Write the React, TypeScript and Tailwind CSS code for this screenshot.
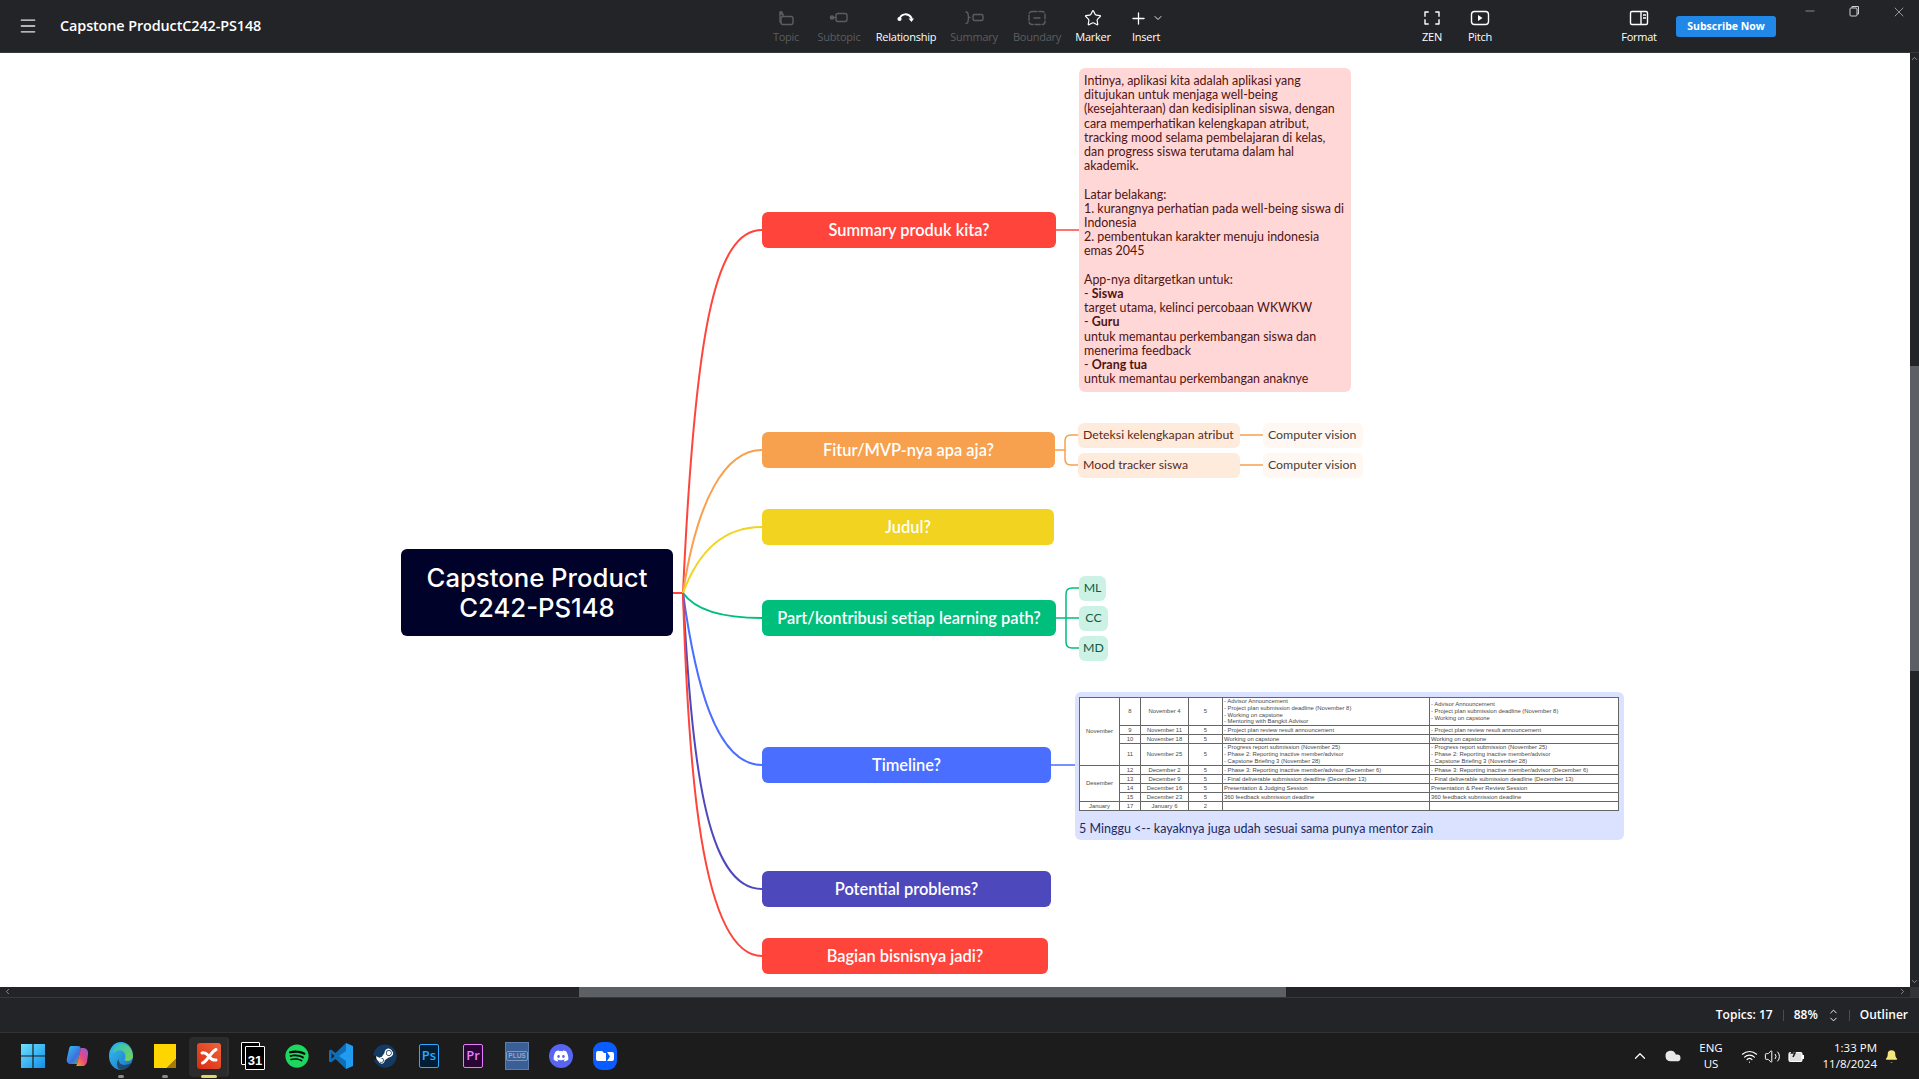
import React from "react";
import { Menu, Star, Plus, ChevronDown, ChevronUp, ChevronLeft, ChevronRight, X, Minus, Wifi, Volume2, Bell, Cloud } from "lucide-react";
import { FaSpotify, FaSteam, FaDiscord } from "react-icons/fa";

const IconBase = ({ children, w = 24 }: { children: React.ReactNode; w?: number }) => (
  <svg width={w} height="20" viewBox={`0 0 ${w} 20`} fill="none" stroke="currentColor" strokeWidth="1.4" strokeLinecap="round" strokeLinejoin="round">
    {children}
  </svg>
);

const TopicIcon = () => (
  <IconBase>
    <rect x="7" y="8.5" width="12" height="8" rx="2" />
    <path d="M9 8.5 V6 H6 V14 H7" />
    <circle cx="7" cy="4.8" r="1.2" fill="currentColor" />
  </IconBase>
);
const SubtopicIcon = () => (
  <IconBase>
    <rect x="9" y="5.5" width="11" height="8" rx="2" />
    <circle cx="5" cy="9.5" r="1.6" fill="currentColor" />
    <path d="M5 9.5 H9" />
  </IconBase>
);
const RelationshipIcon = () => (
  <IconBase>
    <path d="M5.5 11 C7 5.5 14 4.5 17.5 10" strokeWidth="2" />
    <path d="M14.5 10.5 H20 L17.5 14 Z" fill="currentColor" stroke="none" />
    <circle cx="5.5" cy="11" r="1.4" fill="currentColor" />
  </IconBase>
);
const SummaryIcon = () => (
  <IconBase>
    <path d="M4 4 C7 4 6 8 6.5 9.5 C6 11 7 15.5 4 15.5 M6.5 9.5 H8" />
    <rect x="11" y="6.5" width="10" height="6" rx="1.5" />
  </IconBase>
);
const BoundaryIcon = () => (
  <IconBase>
    <rect x="4" y="3.5" width="16" height="13" rx="3" strokeDasharray="5 2" />
    <path d="M9 10 H15" />
  </IconBase>
);
const ZenIcon = () => (
  <IconBase>
    <path d="M8 4 H5 V8 M16 4 H19 V8 M8 16 H5 V12 M16 16 H19 V12" strokeLinecap="square" />
  </IconBase>
);
const PitchIcon = () => (
  <IconBase>
    <rect x="3.5" y="3.5" width="17" height="13" rx="3" />
    <path d="M10 7 L14.5 10 L10 13 Z" fill="currentColor" stroke="none" />
  </IconBase>
);
const FormatIcon = () => (
  <IconBase>
    <rect x="3.5" y="3.5" width="17" height="13" rx="1.5" />
    <path d="M14 3.5 V16.5 M16 7 H19 M16 10 H19" strokeLinecap="butt" />
  </IconBase>
);

const ToolButton = ({ width, label, dim, children }: { width: string; label: string; dim?: boolean; children: React.ReactNode }) => (
  <div className={`flex flex-col items-center h-[52px] pt-[8px] ${width} ${dim ? "text-[#5b5d61]" : "text-white"}`}>
    <div className="h-[20px] flex items-center justify-center">{children}</div>
    <span className="text-[11px] tracking-[-0.25px] leading-[16px] mt-[1px] whitespace-nowrap">{label}</span>
  </div>
);

const TopBar = () => (
  <header className="h-[53px] shrink-0 bg-[#232427] border-b border-[#37383b] flex text-white font-['Open_Sans',sans-serif]">
    <div className="w-[760px] flex items-center pl-[18px]">
      <Menu size={20} strokeWidth={1.6} className="text-[#e5e5e5]" />
      <span className="ml-[22px] text-[14.4px] font-semibold tracking-[-0.1px] whitespace-nowrap">Capstone ProductC242-PS148</span>
    </div>
    <ToolButton width="w-[52px]" label="Topic" dim><TopicIcon /></ToolButton>
    <ToolButton width="w-[54px]" label="Subtopic" dim><SubtopicIcon /></ToolButton>
    <ToolButton width="w-[80px]" label="Relationship"><RelationshipIcon /></ToolButton>
    <ToolButton width="w-[56px]" label="Summary" dim><SummaryIcon /></ToolButton>
    <ToolButton width="w-[70px]" label="Boundary" dim><BoundaryIcon /></ToolButton>
    <ToolButton width="w-[42px]" label="Marker"><Star size={18} strokeWidth={1.6} /></ToolButton>
    <ToolButton width="w-[64px]" label="Insert">
      <div className="flex items-center gap-[4px]">
        <Plus size={19} strokeWidth={1.6} />
        <ChevronDown size={12} strokeWidth={1.8} />
      </div>
    </ToolButton>
    <div className="ml-[230px] flex">
      <ToolButton width="w-[48px]" label="ZEN"><ZenIcon /></ToolButton>
      <ToolButton width="w-[48px]" label="Pitch"><PitchIcon /></ToolButton>
    </div>
    <div className="ml-[106px] flex">
      <ToolButton width="w-[58px]" label="Format"><FormatIcon /></ToolButton>
    </div>
    <button className="ml-[8px] mt-[16px] w-[100px] h-[21px] rounded-[3px] bg-[#2288e8] text-[10.5px] font-bold text-white leading-[21px]">Subscribe Now</button>
    <div className="flex items-start ml-[27px] pt-[4px] gap-[30px] text-[#cfcfcf]">
      <Minus size={14} strokeWidth={1} />
      <svg width="14" height="14" viewBox="0 0 14 14" fill="none" stroke="currentColor" strokeWidth="1"><rect x="3" y="4" width="7" height="8" rx="1" /><path d="M5 4 V2.5 H11.5 V10 H10" /></svg>
      <X size={16} strokeWidth={1} />
    </div>
  </header>
);

const rows = [
  { wk: "8", date: "November 4", n: "5", a: ["- Advisor Announcement", "- Project plan submission deadline (November 8)", "- Working on capstone", "- Mentoring with Bangkit Advisor"], b: ["- Advisor Announcement", "- Project plan submission deadline (November 8)", "- Working on capstone"], h: "h-[28px]" },
  { wk: "9", date: "November 11", n: "5", a: ["- Project plan review result announcement"], b: ["- Project plan review result announcement"], h: "h-[9px]" },
  { wk: "10", date: "November 18", n: "5", a: ["Working on capstone"], b: ["Working on capstone"], h: "h-[9px]" },
  { wk: "11", date: "November 25", n: "5", a: ["- Progress report submission (November 25)", "- Phase 2: Reporting inactive member/advisor", "- Capstone Briefing 3 (November 28)"], b: ["- Progress report submission (November 25)", "- Phase 2: Reporting inactive member/advisor", "- Capstone Briefing 3 (November 28)"], h: "h-[22px]" },
  { wk: "12", date: "December 2", n: "5", a: ["- Phase 3: Reporting inactive member/advisor (December 6)"], b: ["- Phase 3: Reporting inactive member/advisor (December 6)"], h: "h-[9px]" },
  { wk: "13", date: "December 9", n: "5", a: ["- Final deliverable submission deadline (December 13)"], b: ["- Final deliverable submission deadline (December 13)"], h: "h-[9px]" },
  { wk: "14", date: "December 16", n: "5", a: ["Presentation & Judging Session"], b: ["Presentation & Peer Review Session"], h: "h-[9px]" },
  { wk: "15", date: "December 23", n: "5", a: ["360 feedback submission deadline"], b: ["360 feedback submission deadline"], h: "h-[9px]" },
  { wk: "17", date: "January 6", n: "2", a: [""], b: [""], h: "h-[9px]" },
];

const cell = "border border-[#666] p-0 text-center align-middle";
const textCell = "border border-[#666] p-0 pl-[1px] text-left align-middle whitespace-nowrap overflow-hidden";

const ScheduleTable = () => (
  <table className="table-fixed border-collapse w-[539px] h-[112px] bg-white text-[#4a4a4a] text-[5.9px] leading-[6.7px] font-['Liberation_Sans',sans-serif]">
    <colgroup>
      <col className="w-[40px]" />
      <col className="w-[21px]" />
      <col className="w-[48px]" />
      <col className="w-[34px]" />
      <col className="w-[207px]" />
      <col className="w-[189px]" />
    </colgroup>
    <tbody>
      {rows.map((r, i) => (
        <tr key={r.wk} className={r.h}>
          {i === 0 && <td rowSpan={4} className={cell}>November</td>}
          {i === 4 && <td rowSpan={4} className={cell}>Desember</td>}
          {i === 8 && <td className={cell}>January</td>}
          <td className={cell}>{r.wk}</td>
          <td className={cell}>{r.date}</td>
          <td className={cell}>{r.n}</td>
          <td className={textCell}>{r.a.map((t, j) => <div key={j}>{t}</div>)}</td>
          <td className={textCell}>{r.b.map((t, j) => <div key={j}>{t}</div>)}</td>
        </tr>
      ))}
    </tbody>
  </table>
);

const TopicNode = ({ cls, children }: { cls: string; children: React.ReactNode }) => (
  <div className={`absolute left-[762px] h-[36px] rounded-[6px] flex items-center justify-center text-white text-[16.4px] font-semibold whitespace-nowrap ${cls}`}>{children}</div>
);
const SubNode = ({ cls, children }: { cls: string; children: React.ReactNode }) => (
  <div className={`absolute h-[25px] rounded-[6px] flex items-center text-[12.3px] whitespace-nowrap ${cls}`}>{children}</div>
);

const summaryLines: React.ReactNode[] = [
  "Intinya, aplikasi kita adalah aplikasi yang",
  "ditujukan untuk menjaga well-being",
  "(kesejahteraan) dan kedisiplinan siswa, dengan",
  "cara memperhatikan kelengkapan atribut,",
  "tracking mood selama pembelajaran di kelas,",
  "dan progress siswa terutama dalam hal",
  "akademik.",
  "\u00a0",
  "Latar belakang:",
  "1. kurangnya perhatian pada well-being siswa di",
  "Indonesia",
  "2. pembentukan karakter menuju indonesia",
  "emas 2045",
  "\u00a0",
  "App-nya ditargetkan untuk:",
  <>- <b className="font-bold">Siswa</b></>,
  "target utama, kelinci percobaan WKWKW",
  <>- <b className="font-bold">Guru</b></>,
  "untuk memantau perkembangan siswa dan",
  "menerima feedback",
  <>- <b className="font-bold">Orang tua</b></>,
  "untuk memantau perkembangan anaknye",
];

const Connectors = () => (
  <svg className="absolute left-0 top-0 pointer-events-none" width="1910" height="934" viewBox="0 53 1910 934" fill="none" strokeWidth="2">
    <path d="M673 593 H683" stroke="#ff443b" />
    <path d="M683 593 C695 330 715 230 762 230" stroke="#ff443b" />
    <path d="M683 593 C697 500 725 450 762 450" stroke="#f7a04e" />
    <path d="M683 593 C697 555 720 527 762 527" stroke="#f2d31f" />
    <path d="M683 593 C695 610 720 618 762 618" stroke="#00be7b" />
    <path d="M683 593 C695 680 715 765 762 765" stroke="#4a6eff" />
    <path d="M683 593 C692 760 705 889 762 889" stroke="#4d49bc" />
    <path d="M683 593 C688 760 700 956 762 956" stroke="#ff443b" />
    <path d="M1056 230 H1079" stroke="#ff443b" strokeWidth="1.5" />
    <path d="M1055 450 H1065 M1078 435 H1071 Q1065 435 1065 441 V459 Q1065 465 1071 465 H1078 M1240 435 H1263 M1240 465 H1263" stroke="#f7a04e" strokeWidth="1.5" />
    <path d="M1056 618 H1079 M1079 588 H1072 Q1066 588 1066 594 V642 Q1066 648 1072 648 H1079" stroke="#00be7b" strokeWidth="1.5" />
    <path d="M1051 765 H1075" stroke="#4a6eff" strokeWidth="1.5" />
  </svg>
);

const Canvas = () => (
  <main className="relative flex-1 bg-white overflow-hidden font-['Lato',sans-serif]">
    <Connectors />
    <div className="absolute left-[401px] top-[496px] w-[272px] h-[87px] rounded-[6px] bg-[#000229] text-white flex items-center justify-center text-center text-[25.7px] leading-[30px] font-medium font-['Inter',sans-serif]">
      <div>Capstone Product<br />C242-PS148</div>
    </div>

    <TopicNode cls="top-[159px] w-[294px] bg-[#ff443b]">Summary produk kita?</TopicNode>
    <TopicNode cls="top-[379px] w-[293px] bg-[#f7a04e]">Fitur/MVP-nya apa aja?</TopicNode>
    <TopicNode cls="top-[456px] w-[292px] bg-[#f2d31f]">Judul?</TopicNode>
    <TopicNode cls="top-[547px] w-[294px] bg-[#00be7b]">Part/kontribusi setiap learning path?</TopicNode>
    <TopicNode cls="top-[694px] w-[289px] bg-[#4a6eff]">Timeline?</TopicNode>
    <TopicNode cls="top-[818px] w-[289px] bg-[#4d49bc]">Potential problems?</TopicNode>
    <TopicNode cls="top-[885px] w-[286px] bg-[#ff443b]">Bagian bisnisnya jadi?</TopicNode>

    <div className="absolute left-[1079px] top-[15px] w-[272px] h-[324px] rounded-[6px] bg-[#ffd7d6] pt-[6px] pl-[5px] text-[#4f1414] text-[12.45px] leading-[14.2px] whitespace-nowrap">
      {summaryLines.map((l, i) => <div key={i}>{l}</div>)}
    </div>

    <SubNode cls="left-[1078px] top-[370px] w-[162px] pl-[5px] bg-[#ffebdc] text-[#5a2a1a]">Deteksi kelengkapan atribut</SubNode>
    <SubNode cls="left-[1078px] top-[400px] w-[162px] pl-[5px] bg-[#ffebdc] text-[#5a2a1a]">Mood tracker siswa</SubNode>
    <SubNode cls="left-[1263px] top-[370px] w-[100px] pl-[5px] bg-[#fff7f1] text-[#44403c]">Computer vision</SubNode>
    <SubNode cls="left-[1263px] top-[400px] w-[100px] pl-[5px] bg-[#fff7f1] text-[#44403c]">Computer vision</SubNode>

    <SubNode cls="left-[1079px] top-[523px] w-[27px] justify-center bg-[#ccf2e5] text-[#0d5c43]">ML</SubNode>
    <SubNode cls="left-[1079px] top-[553px] w-[29px] justify-center bg-[#ccf2e5] text-[#0d5c43]">CC</SubNode>
    <SubNode cls="left-[1079px] top-[583px] w-[29px] justify-center bg-[#ccf2e5] text-[#0d5c43]">MD</SubNode>

    <div className="absolute left-[1075px] top-[639px] w-[549px] h-[148px] rounded-[6px] bg-[#dae2ff] pt-[5px] pl-[4px] text-[#1c2a5e]">
      <ScheduleTable />
      <div className="mt-[10px] text-[12.5px] leading-[16px] whitespace-nowrap">5 Minggu &lt;-- kayaknya juga udah sesuai sama punya mentor zain</div>
    </div>
  </main>
);

const VScroll = () => (
  <aside className="relative w-[9px] shrink-0 bg-[#232427]">
    <ChevronUp size={9} className="absolute left-0 top-[1px] text-[#aaa]" />
    <div className="mt-[313px] h-[305px] bg-[#5c5f63]" />
    <ChevronDown size={9} className="absolute left-0 bottom-[1px] text-[#aaa]" />
  </aside>
);

const HScroll = () => (
  <div className="relative h-[10px] shrink-0 bg-[#232427] flex pr-[9px]">
    <ChevronLeft size={9} className="absolute left-[3px] top-0 text-[#aaa]" />
    <div className="ml-[579px] w-[707px] h-full bg-[#5c5f63]" />
    <ChevronRight size={9} className="absolute right-[12px] top-0 text-[#aaa]" />
    <div className="absolute right-0 top-0 w-[9px] h-full bg-[#333437]" />
  </div>
);

const StatusBar = () => (
  <div className="h-[35px] shrink-0 bg-[#232427] border-t border-[#37383b] flex items-center justify-end pr-[11px] text-white text-[12px] font-semibold font-['Open_Sans',sans-serif]">
    <span>Topics: 17</span>
    <span className="mx-[10px] h-[11px] w-px bg-[#4b4c50]" />
    <span>88%</span>
    <span className="ml-[10px] flex flex-col items-center -space-y-[3px]">
      <ChevronUp size={11} strokeWidth={2} />
      <ChevronDown size={11} strokeWidth={2} />
    </span>
    <span className="mx-[10px] h-[11px] w-px bg-[#4b4c50]" />
    <span>Outliner</span>
  </div>
);

const Slot = ({ children, active, dot }: { children: React.ReactNode; active?: boolean; dot?: boolean }) => (
  <div className="relative w-[44px] h-[47px] flex items-center justify-center">
    {active && <div className="absolute left-[2px] top-[4px] w-[40px] h-[40px] rounded-[4px] bg-[#2b2b2b] border-r-2 border-[#333]" />}
    <div className="relative flex items-center justify-center">{children}</div>
    {dot && <div className="absolute left-[19px] bottom-[2px] w-[6px] h-[3px] rounded-full bg-[#8a8a8a]" />}
    {active && <div className="absolute left-[14px] bottom-[2px] w-[16px] h-[3px] rounded-full bg-[#e6d36a]" />}
  </div>
);

const WinIcon = () => (
  <svg width="24" height="24" viewBox="0 0 24 24">
    <defs><linearGradient id="win" x1="0" y1="0" x2="1" y2="1"><stop offset="0" stopColor="#6fe0ff" /><stop offset="1" stopColor="#0f8fe8" /></linearGradient></defs>
    <path fill="url(#win)" d="M0 0H11.4V11.4H0ZM12.6 0H24V11.4H12.6ZM0 12.6H11.4V24H0ZM12.6 12.6H24V24H12.6Z" />
  </svg>
);
const CopilotIcon = () => (
  <svg width="24" height="24" viewBox="0 0 24 24">
    <defs>
      <linearGradient id="co1" x1="0" y1="0" x2="1" y2="1"><stop offset="0" stopColor="#2ec4f0" /><stop offset="0.6" stopColor="#3f6fe0" /><stop offset="1" stopColor="#50c060" /></linearGradient>
      <linearGradient id="co2" x1="0" y1="1" x2="1" y2="0"><stop offset="0" stopColor="#f5a623" /><stop offset="0.5" stopColor="#e8477e" /><stop offset="1" stopColor="#8a5be8" /></linearGradient>
    </defs>
    <path fill="url(#co1)" d="M6 2 H13 C15 2 15.5 3 16 5 L12 20 H6 C3 20 1 18 2 14 L4 5 C4.5 3 5 2 6 2Z" />
    <path fill="url(#co2)" d="M11 22 H18 C20 22 21 20 22 18 L23 10 C23.5 6 21 4 18 4 H16 L12 20 C11.7 21 11.5 21.5 11 22Z" />
  </svg>
);
const EdgeIcon = () => (
  <svg width="24" height="28" viewBox="0 0 24 24" preserveAspectRatio="none">
    <defs>
      <linearGradient id="ed1" x1="0" y1="0" x2="1" y2="1"><stop offset="0" stopColor="#35c1f1" /><stop offset="1" stopColor="#1b6fc4" /></linearGradient>
      <linearGradient id="ed2" x1="0" y1="0" x2="1" y2="1"><stop offset="0" stopColor="#2bc0c8" /><stop offset="1" stopColor="#7fd34e" /></linearGradient>
    </defs>
    <circle cx="12" cy="12" r="12" fill="url(#ed1)" />
    <path fill="url(#ed2)" d="M5 5 C10 -1 23 0 24 12 C24 16 18 17.5 15.5 15.5 C18 12 15.5 7 11 7 C8 7 6 8 4 10 Z" />
    <path fill="#1c1c1c" d="M13 24 C8 24 6.5 18 9.5 14.5 C9.5 18 13 21 19 19 C24 17 23 20 21 21.5 C18 24 15 24 13 24Z" opacity=".55" />
  </svg>
);
const StickyIcon = () => (
  <svg width="22" height="24" viewBox="0 0 22 24">
    <path fill="#ffd500" d="M0 0H22V15L13 24H0Z" />
    <path fill="#a87b00" d="M22 15V24H13Z" />
  </svg>
);
const XmindIcon = () => (
  <svg width="24" height="26" viewBox="0 0 24 26">
    <defs><linearGradient id="xm" x1="0" y1="1" x2="1" y2="0"><stop offset="0" stopColor="#d92b10" /><stop offset="1" stopColor="#f0643a" /></linearGradient></defs>
    <rect width="24" height="26" rx="3" fill="url(#xm)" />
    <g fill="none" stroke="#fff" strokeWidth="3" strokeLinecap="round">
      <path d="M5 10 C9 9 10.5 12 12 13.5" />
      <path d="M19 6.5 C15.5 8 14 11.5 12 13.5" />
      <path d="M12 13.5 C13.5 15.5 15.5 17.5 19 17" />
      <path d="M12 13.5 C10.5 15.5 8.5 19 5.5 20" />
    </g>
  </svg>
);
const CalendarIcon = () => (
  <div className="relative w-[24px] h-[28px]">
    <div className="absolute left-0 top-0 w-[19px] h-[23px] border border-white bg-black rounded-[1px]" />
    <div className="absolute left-[4px] top-[4px] w-[20px] h-[24px] border-[1.5px] border-white bg-black rounded-[1px] flex items-end justify-center">
      <span className="text-white text-[13px] leading-[16px] font-bold font-['Liberation_Sans',sans-serif]">31</span>
    </div>
  </div>
);
const VsIcon = () => (
  <svg width="24" height="28" viewBox="0 0 24 28">
    <path fill="#0e6fb8" d="M17 1 L6.5 11 L2 7.5 L0 8.6 V19.4 L2 20.5 L6.5 17 L17 27 Z M2.5 11 L5.5 14 L2.5 17Z" />
    <path fill="#1f9cf0" d="M17 1 L24 4 V24 L17 27 V19 L10 14 L17 9 Z" />
  </svg>
);
const SteamIcon = () => (
  <div className="relative w-[24px] h-[24px]">
    <div className="absolute left-[3px] top-[3px] w-[18px] h-[18px] rounded-full bg-white" />
    <FaSteam size={24} className="relative text-[#123a62]" />
  </div>
);
const AdobeIcon = ({ t, cls }: { t: string; cls: string }) => (
  <div className={`w-[20px] h-[24px] rounded-[2px] border flex items-center justify-center text-[13px] font-semibold font-['Open_Sans',sans-serif] ${cls}`}>{t}</div>
);
const PlusIcon = () => (
  <div className="w-[24px] h-[28px] bg-[#3a5f96] border border-[#5a7db0] flex items-center justify-center">
    <span className="px-[1px] border border-[#7d97be] rounded-[2px] text-[6.5px] leading-[8px] font-bold text-[#92a8c9] font-['Liberation_Sans',sans-serif]">PLUS</span>
  </div>
);
const DiscordIcon = () => (
  <div className="w-[24px] h-[24px] rounded-full bg-[#5865f2] flex items-center justify-center"><FaDiscord size={16} className="text-white" /></div>
);
const SpotifyIcon = () => (
  <div className="relative w-[24px] h-[24px] flex items-center justify-center">
    <div className="absolute inset-[3px] rounded-full bg-black" />
    <FaSpotify size={24} className="relative text-[#1ed760]" />
  </div>
);
const ZoomLikeIcon = () => (
  <svg width="24" height="28" viewBox="0 0 24 28">
    <rect width="24" height="28" rx="9" fill="#0b5cff" />
    <path fill="#fff" d="M3 11 Q3 9 5 9 H9 L11 11 H13 V19 H5 Q3 19 3 17Z" />
    <path fill="#fff" d="M14 10 H19 Q21 10 21 12 V17 Q21 19 19 19 H14 L17 14.5Z" />
  </svg>
);

const Taskbar = () => (
  <footer className="h-[47px] shrink-0 bg-[#1c1c1c] border-t border-[#333] flex items-center pl-[11px] text-white font-['Open_Sans',sans-serif]">
    <Slot><WinIcon /></Slot>
    <Slot><CopilotIcon /></Slot>
    <Slot dot><EdgeIcon /></Slot>
    <Slot dot><StickyIcon /></Slot>
    <Slot active><XmindIcon /></Slot>
    <Slot><CalendarIcon /></Slot>
    <Slot><SpotifyIcon /></Slot>
    <Slot><VsIcon /></Slot>
    <Slot><SteamIcon /></Slot>
    <Slot><AdobeIcon t="Ps" cls="bg-[#001e36] border-[#31a8ff] text-[#31a8ff]" /></Slot>
    <Slot><AdobeIcon t="Pr" cls="bg-[#2a0634] border-[#e77cff] text-[#e77cff]" /></Slot>
    <Slot><PlusIcon /></Slot>
    <Slot><DiscordIcon /></Slot>
    <Slot><ZoomLikeIcon /></Slot>
    <div className="ml-auto flex items-center text-[11.5px] pr-[20px]">
      <ChevronUp size={18} strokeWidth={1.6} />
      <Cloud size={18} fill="#e8e8e8" strokeWidth={0} className="ml-[15px]" />
      <div className="ml-[17px] w-[24px] flex flex-col items-center leading-[16px]"><span>ENG</span><span>US</span></div>
      <Wifi size={17} strokeWidth={1.6} className="ml-[18px]" />
      <Volume2 size={17} strokeWidth={1.4} className="ml-[6px]" />
      <svg width="18" height="16" viewBox="0 0 18 16" className="ml-[7px]" fill="none" stroke="#fff" strokeWidth="1.2">
        <rect x="1" y="4.5" width="13" height="9" rx="1.5" fill="#fff" fillOpacity=".85" />
        <path d="M15 7 V11" strokeWidth="2" />
        <path d="M6 0 L3.5 5 H7 L5 9" stroke="#1c1c1c" strokeWidth="1.6" />
      </svg>
      <div className="ml-[16px] w-[55px] flex flex-col items-end leading-[16px] whitespace-nowrap"><span>1:33 PM</span><span>11/8/2024</span></div>
      <Bell size={15} fill="#f3e57e" strokeWidth={0} className="ml-[7px]" />
    </div>
  </footer>
);

export default function App() {
  return (
    <div className="w-screen h-screen flex flex-col overflow-hidden bg-[#232427]">
      <TopBar />
      <div className="flex-1 flex min-h-0">
        <Canvas />
        <VScroll />
      </div>
      <HScroll />
      <StatusBar />
      <Taskbar />
    </div>
  );
}
